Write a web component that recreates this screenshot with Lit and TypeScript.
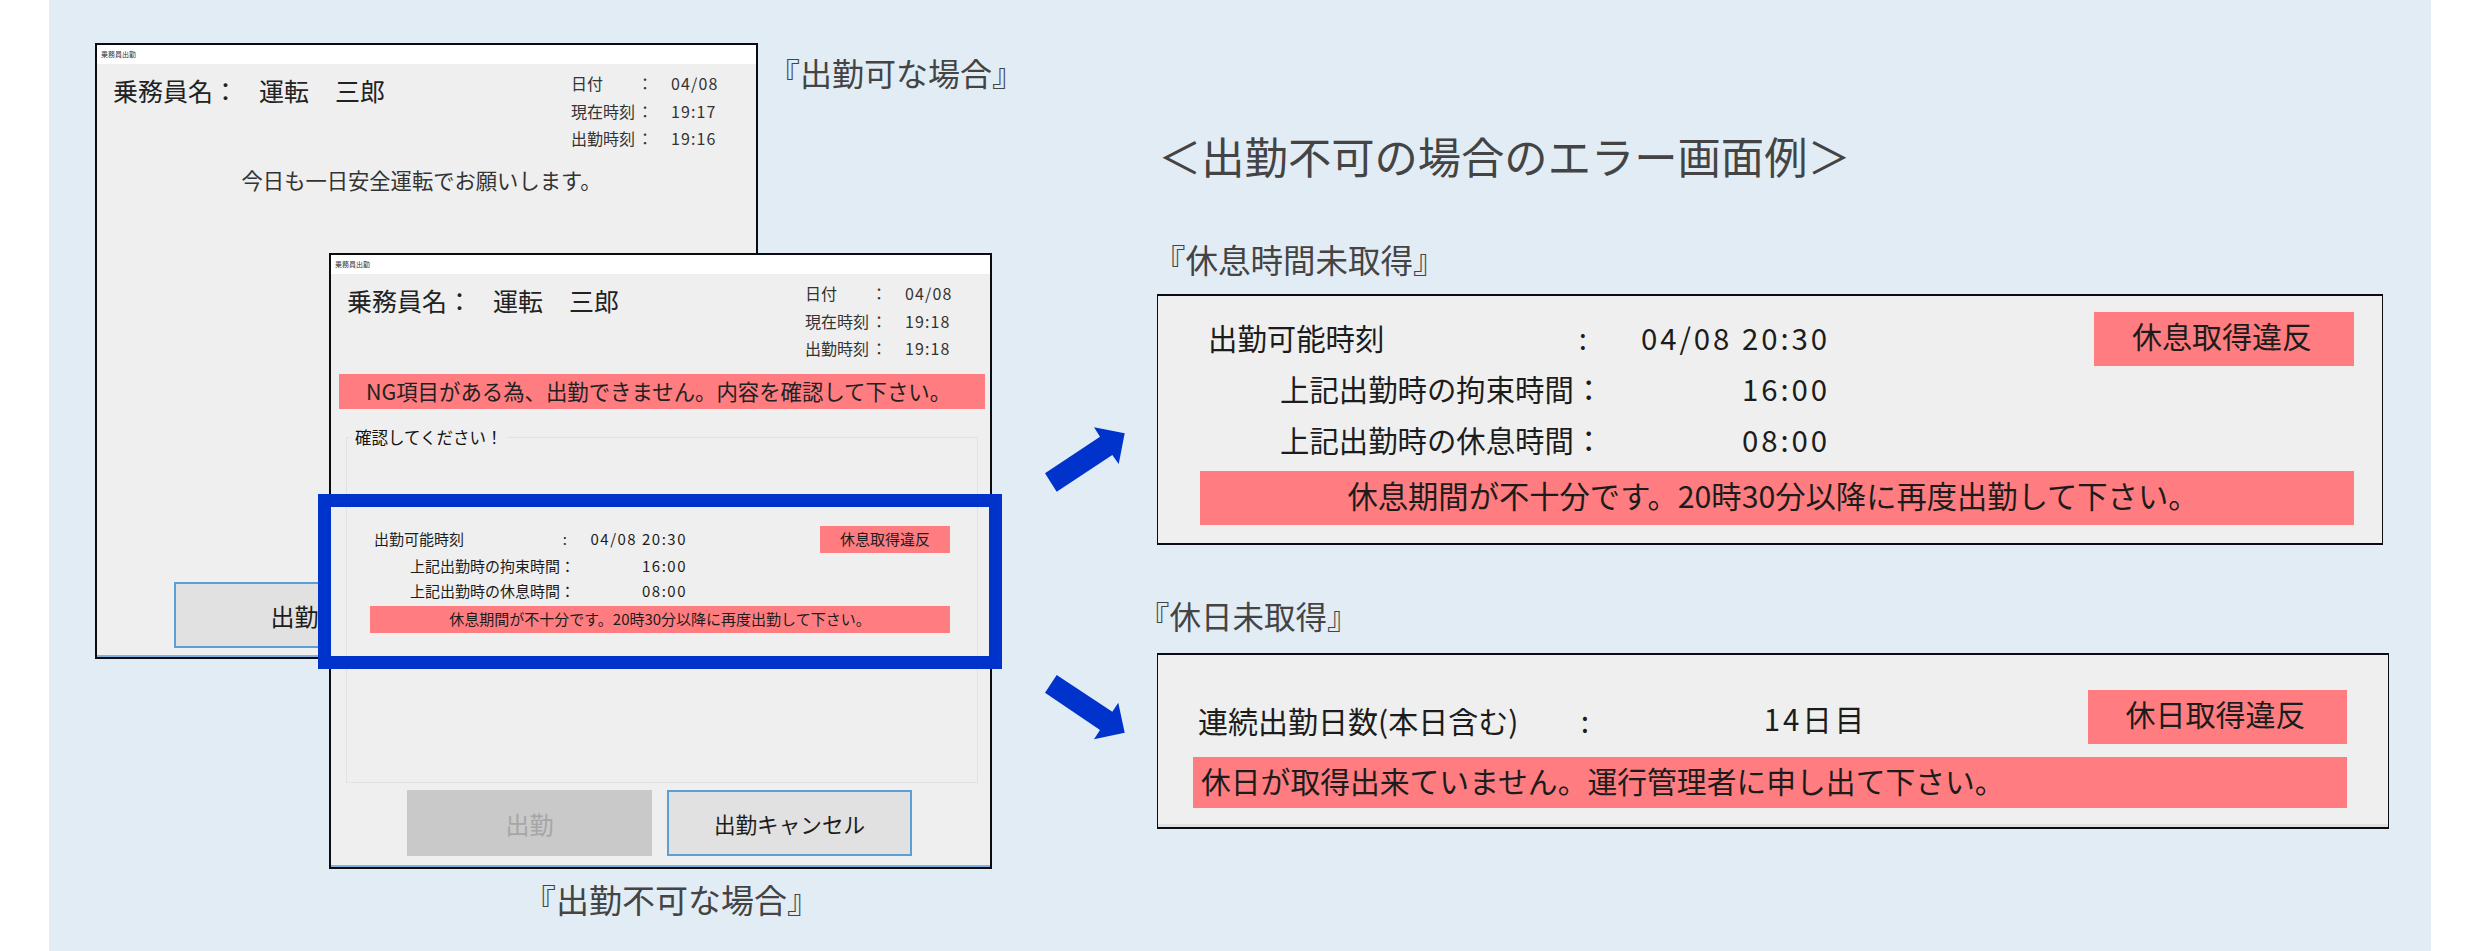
import { LitElement, html, css } from "lit";
import { customElement } from "lit/decorators.js";

@customElement("app-root")
export class AppRoot extends LitElement {
  static styles = css`
    :host {
      display: block;
      width: 2480px;
      height: 951px;
      background: #fff;
      overflow: hidden;
      font-family: "Noto Sans CJK JP", "Noto Sans", sans-serif;
      color: #1c1c1c;
    }
    * { box-sizing: border-box; }
    .panel {
      position: relative;
      margin-left: 49px;
      width: 2382px;
      height: 951px;
      background: #e2ecf5;
    }
    .cap { position: absolute; font-size: 32px; line-height: 40px; color: #444; white-space: nowrap; }
    .cap-ok { left: 719px; top: 52px; }
    .cap-ng { left: 474px; top: 879px; font-size: 33px; }
    .cap-rest { left: 1104px; top: 239px; font-size: 32.5px; }
    .cap-holiday { left: 1089px; top: 595px; font-size: 31.5px; }
    .title { position: absolute; left: 1109px; top: 126px; font-size: 43.3px; line-height: 58px; color: #444; white-space: nowrap; }

    .win {
      position: absolute;
      width: 663px;
      height: 616px;
      background: #efefef;
      border: 2px solid #0b0b12;
      box-shadow: inset 0 -2px 0 #7fb2e0;
      display: flex;
      flex-direction: column;
    }
    .win-a { left: 46px; top: 43px; }
    .win-b { left: 280px; top: 253px; }
    .titlebar {
      height: 19px;
      flex: none;
      background: #fff;
      font-size: 7px;
      line-height: 19px;
      padding-left: 4px;
      color: #333;
    }
    .head { display: flex; justify-content: space-between; height: 88px; flex: none; padding: 6px 37px 0 16px; }
    .name { font-size: 25px; line-height: 36px; margin-top: 2px; display: flex; color: #222; white-space: nowrap; }
    .name-who { margin-left: 21px; }
    .name-given { margin-left: 26px; }
    .info { display: grid; grid-template-columns: 66px 34px 48px; grid-auto-rows: 27.5px; font-size: 16px; line-height: 27.5px; color: #333; }
    .time { letter-spacing: 0.07em; }
    .message { font-size: 21.3px; line-height: 30px; text-align: center; margin-top: 13px; padding-right: 10px; color: #333; }
    .btn {
      width: 245px;
      height: 66px;
      display: flex;
      align-items: center;
      justify-content: center;
      font-size: 24px;
      background: #e1e1e1;
      border: 2px solid #5a9fd8;
      color: #1c1c1c;
      white-space: nowrap;
    }
    .btn.off { background: #c9c9c9; border-color: #c9c9c9; color: #a6a6a6; }
    .btn-a { margin-top: auto; margin-bottom: 9px; margin-left: 77px; padding-right: 4px; }
    .cancel-text { font-size: 21.6px; }
    .alert {
      flex: none;
      height: 35px;
      margin: 12px 5px 0 8px;
      padding-left: 27px;
      background: #ff7c80;
      font-size: 21.4px;
      line-height: 33px;
      white-space: nowrap;
      color: #222;
    }
    fieldset {
      flex: none;
      margin: 16px 12px 0 15px;
      height: 358px;
      padding: 77px 25px 0 23px;
      border: 1px solid #e2e2e2;
      min-width: 0;
    }
    legend { margin-left: -19px; padding: 0 4px; font-size: 16.5px; line-height: 24px; color: #111; }
    .actions { display: flex; gap: 15px; padding-left: 76px; margin-top: 7px; }

    .err { display: grid; color: #1c1c1c; white-space: nowrap; }
    .lab { display: flex; justify-content: space-between; }
    .val { text-align: right; letter-spacing: 0.1em; }
    .badge, .bar { background: #ff7c80; text-align: center; }
    .bar { grid-column: 1 / -1; }

    .sm { grid-template-columns: 205px 112px 1fr 130px; grid-template-rows: 27px 25px 25px 27px; font-size: 15px; line-height: 25px; width: 580px; }
    .sm .first { padding-left: 4px; padding-right: 8px; }
    .sm .rest { padding-left: 40px; }
    .sm .bar { margin-top: 3px; height: 27px; }

    .pane { position: absolute; background: #efefef; border: solid #0b0b12; border-width: 2px 1px; }
    .pane-a { left: 1108px; top: 294px; width: 1226px; height: 251px; padding: 16px 28px 0 42px; }
    .pane-b { left: 1108px; top: 653px; width: 1232px; height: 176px; padding: 35px 41px 0 35px; box-shadow: inset 0 -3px 0 #e0e0e0; }
    .lg { font-size: 29.4px; line-height: 42px; }
    .lg .badge { font-size: 30px; line-height: 46px; padding-right: 4px; }
    .lg .bar { font-size: 30.3px; }
    .lg-a { grid-template-columns: 399px 231px 1fr 260px; grid-template-rows: 54px 48px 50px 54px; }
    .lg-a .first { padding-left: 8px; padding-right: 12px; }
    .lg-a .rest { padding-left: 80px; }
    .lg-a .lab, .lg-a .val { line-height: 51px; }
    .lg-a .r2 { margin-top: -3px; }
    .lg-a .bar { margin-top: 7px; height: 54px; line-height: 48px; padding-right: 8px; }
    .lg-b { grid-template-columns: 400px 274px 1fr 259px; grid-template-rows: 54px 51px; }
    .lg-b .first { padding-left: 5px; padding-right: 4px; align-items: flex-end; font-size: 30px; line-height: 48px; height: 54px; padding-top: 8px; }
    .lg-b .val { line-height: 56px; }
    .lg .note { margin-top: 13px; height: 51px; line-height: 46px; text-align: left; padding-left: 8px; font-size: 29.8px; }

    .highlight { position: absolute; left: 269px; top: 494px; width: 684px; height: 175px; border: 13px solid #0033cc; }
    .arrow { position: absolute; display: block; fill: #0033cc; }
    .arrow-up { left: 991px; top: 420px; }
    .arrow-down { left: 991px; top: 670px; }
  `;

  private header(now: string, start: string) {
    return html`<div class="head">
      <div class="name">
        <span>乗務員名：</span><span class="name-who">運転</span><span class="name-given">三郎</span>
      </div>
      <div class="info">
        <span>日付</span><span>：</span><span class="time">04/08</span>
        <span>現在時刻</span><span>：</span><span class="time">${now}</span>
        <span>出勤時刻</span><span>：</span><span class="time">${start}</span>
      </div>
    </div>`;
  }

  render() {
    return html`<div class="panel">
      <div class="win win-a">
        <div class="titlebar">乗務員出勤</div>
        ${this.header("19:17", "19:16")}
        <div class="message">今日も一日安全運転でお願いします。</div>
        <div class="btn btn-a">出勤</div>
      </div>
      <div class="cap cap-ok">『出勤可な場合』</div>

      <div class="win win-b">
        <div class="titlebar">乗務員出勤</div>
        ${this.header("19:18", "19:18")}
        <div class="alert">NG項目がある為、出勤できません。内容を確認して下さい。</div>
        <fieldset>
          <legend>確認してください！</legend>
          <div class="err sm">
            <div class="lab first"><span>出勤可能時刻</span><span>:</span></div>
            <div class="val">04/08 20:30</div>
            <div></div>
            <div class="badge">休息取得違反</div>
            <div class="lab rest">上記出勤時の拘束時間：</div>
            <div class="val">16:00</div>
            <div></div><div></div>
            <div class="lab rest">上記出勤時の休息時間：</div>
            <div class="val">08:00</div>
            <div></div><div></div>
            <div class="bar">休息期間が不十分です。20時30分以降に再度出勤して下さい。</div>
          </div>
        </fieldset>
        <div class="actions">
          <div class="btn off">出勤</div>
          <div class="btn"><span class="cancel-text">出勤キャンセル</span></div>
        </div>
      </div>
      <div class="cap cap-ng">『出勤不可な場合』</div>
      <div class="highlight"></div>

      <div class="title">＜出勤不可の場合のエラー画面例＞</div>
      <div class="cap cap-rest">『休息時間未取得』</div>
      <div class="pane pane-a">
        <div class="err lg lg-a">
          <div class="lab first"><span>出勤可能時刻</span><span>:</span></div>
          <div class="val">04/08 20:30</div>
          <div></div>
          <div class="badge">休息取得違反</div>
          <div class="lab rest r2">上記出勤時の拘束時間：</div>
          <div class="val r2">16:00</div>
          <div></div><div></div>
          <div class="lab rest">上記出勤時の休息時間：</div>
          <div class="val">08:00</div>
          <div></div><div></div>
          <div class="bar">休息期間が不十分です。20時30分以降に再度出勤して下さい。</div>
        </div>
      </div>

      <div class="cap cap-holiday">『休日未取得』</div>
      <div class="pane pane-b">
        <div class="err lg lg-b">
          <div class="lab first"><span>連続出勤日数(本日含む)</span><span>:</span></div>
          <div class="val">14日目</div>
          <div></div>
          <div class="badge">休日取得違反</div>
          <div class="bar note">休日が取得出来ていません。運行管理者に申し出て下さい。</div>
        </div>
      </div>

      <svg class="arrow arrow-up" width="90" height="80" viewBox="1040 420 90 80">
        <polygon points="1045,473.3 1056.7,491.7 1112.3,455 1118.7,464 1124.7,433.3 1094,427.3 1100,436.7"></polygon>
      </svg>
      <svg class="arrow arrow-down" width="90" height="80" viewBox="1040 670 90 80">
        <polygon points="1056.7,675 1045,692.7 1100,730 1094,739.3 1124.7,732.7 1118.3,702.7 1112.3,711.7"></polygon>
      </svg>
    </div>`;
  }
}
